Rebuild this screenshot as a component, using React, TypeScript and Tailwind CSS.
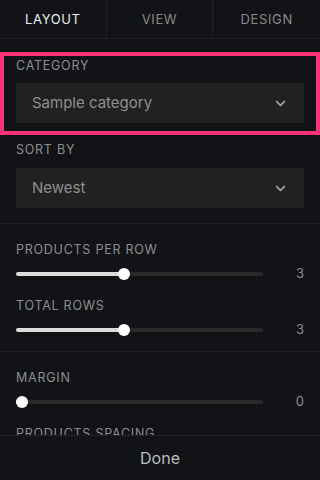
import { ChevronDown } from 'lucide-react'

const tabs = [
    { name: 'Layout', active: true },
    { name: 'View', active: false },
    { name: 'Design', active: false },
]

function Label({ children }: { children: React.ReactNode }) {
    return <div className="h-4 text-[12.5px] leading-[18px] uppercase tracking-[0.06em] text-[#8e8e8e]">{children}</div>
}

function Select({ value }: { value: string }) {
    return (
        <div className="h-10 rounded-[2px] bg-[#212121] pl-4 pr-4 flex items-center justify-between">
            <span className="text-[15px] text-[#8e8e8e]">{value}</span>
            <ChevronDown size={15} strokeWidth={3.2} className="text-[#9a9a9a]" />
        </div>
    )
}

function Slider({ pct, value }: { pct: number, value: number }) {
    // thumb center goes from 6px to (track width - 6px)
    const center = 6 + pct * (247 - 12)
    return (
        <div className="mt-[11px] h-3 flex items-center">
            <div className="relative w-[247px] h-[4px] rounded-full bg-[#2a2a2a]">
                <div className="absolute left-0 top-0 h-full rounded-full bg-[#dcdcdc]" style={{ width: center }} />
                <div className="absolute top-1/2 w-3 h-3 -translate-y-1/2 -translate-x-1/2 rounded-full bg-white" style={{ left: center }} />
            </div>
            <span className="flex-1 text-right text-[13px] text-[#8c8c8c]">{value}</span>
        </div>
    )
}

export default function App() {
    return (
        <div className="w-[320px] h-[480px] bg-[#111317] flex flex-col overflow-hidden" style={{ fontFamily: 'Inter, "Noto Sans", sans-serif' }}>
            <nav className="h-[39px] shrink-0 grid grid-cols-3 border-b border-[#1e2126]">
                {tabs.map((t, i) => (
                    <div key={t.name} className={`flex items-center justify-center pt-[2px] text-[13px] uppercase tracking-[0.05em] ${i < 2 ? 'border-r border-[#1e2126]' : ''} ${t.active ? 'text-[#ececec]' : 'text-[#8a8a8a]'}`}>
                        {t.name}
                    </div>
                ))}
            </nav>
            <main className="flex-1 overflow-hidden">
                <div className="mt-[13px] border-4 border-[#ff3377] px-3 pt-px pb-2">
                    <Label>Category</Label>
                    <div className="mt-[10px]">
                        <Select value="Sample category" />
                    </div>
                </div>
                <div className="px-4 pt-[6px] pb-[15px] border-b border-[#1e2126]">
                    <Label>Sort by</Label>
                    <div className="mt-[11px]">
                        <Select value="Newest" />
                    </div>
                </div>
                <div className="px-4 pt-[17px] pb-[15px] border-b border-[#1e2126]">
                    <Label>Products per row</Label>
                    <Slider pct={0.434} value={3} />
                    <div className="mt-[17px]">
                        <Label>Total rows</Label>
                    </div>
                    <Slider pct={0.434} value={3} />
                </div>
                <div className="px-4 pt-[17px]">
                    <Label>Margin</Label>
                    <Slider pct={0} value={0} />
                    <div className="mt-[17px]">
                        <Label>Products spacing</Label>
                    </div>
                </div>
            </main>
            <footer className="h-[45px] shrink-0 border-t border-[#1e2126] flex items-center justify-center">
                <button className="text-[16px] text-[#bdbdbd]">Done</button>
            </footer>
        </div>
    )
}
